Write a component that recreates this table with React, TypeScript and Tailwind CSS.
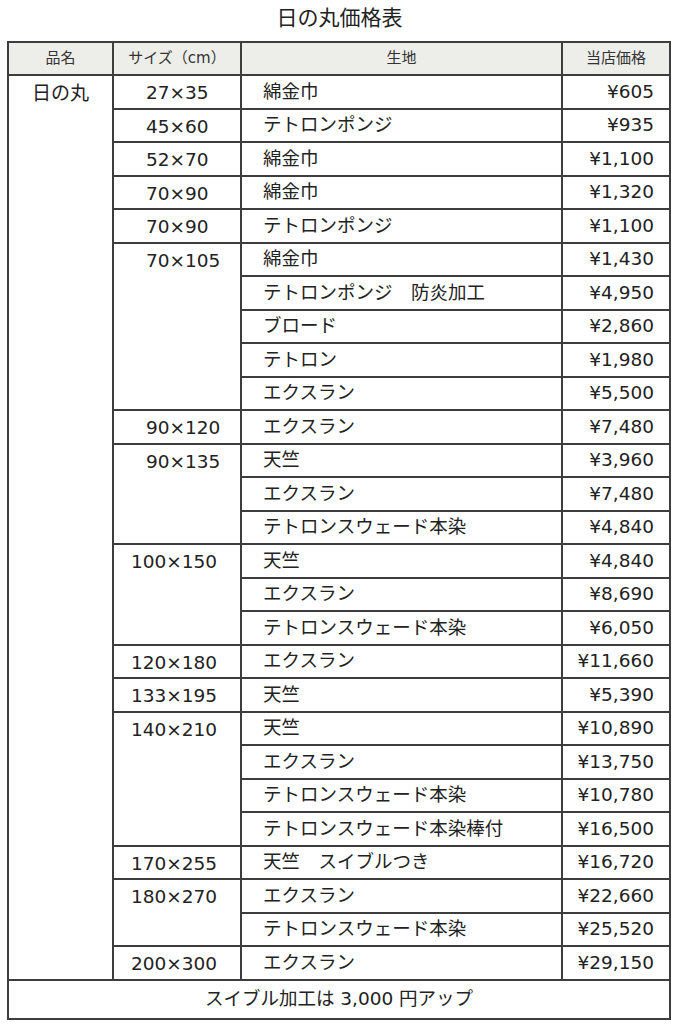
import React from "react"

type Group = { size: string; items: [string, string][] }

const groups: Group[] = [
  { size: "27×35", items: [["綿金巾", "¥605"]] },
  { size: "45×60", items: [["テトロンポンジ", "¥935"]] },
  { size: "52×70", items: [["綿金巾", "¥1,100"]] },
  { size: "70×90", items: [["綿金巾", "¥1,320"]] },
  { size: "70×90", items: [["テトロンポンジ", "¥1,100"]] },
  {
    size: "70×105",
    items: [
      ["綿金巾", "¥1,430"],
      ["テトロンポンジ　防炎加工", "¥4,950"],
      ["ブロード", "¥2,860"],
      ["テトロン", "¥1,980"],
      ["エクスラン", "¥5,500"],
    ],
  },
  { size: "90×120", items: [["エクスラン", "¥7,480"]] },
  {
    size: "90×135",
    items: [
      ["天竺", "¥3,960"],
      ["エクスラン", "¥7,480"],
      ["テトロンスウェード本染", "¥4,840"],
    ],
  },
  {
    size: "100×150",
    items: [
      ["天竺", "¥4,840"],
      ["エクスラン", "¥8,690"],
      ["テトロンスウェード本染", "¥6,050"],
    ],
  },
  { size: "120×180", items: [["エクスラン", "¥11,660"]] },
  { size: "133×195", items: [["天竺", "¥5,390"]] },
  {
    size: "140×210",
    items: [
      ["天竺", "¥10,890"],
      ["エクスラン", "¥13,750"],
      ["テトロンスウェード本染", "¥10,780"],
      ["テトロンスウェード本染棒付", "¥16,500"],
    ],
  },
  { size: "170×255", items: [["天竺　スイブルつき", "¥16,720"]] },
  {
    size: "180×270",
    items: [
      ["エクスラン", "¥22,660"],
      ["テトロンスウェード本染", "¥25,520"],
    ],
  },
  { size: "200×300", items: [["エクスラン", "¥29,150"]] },
]

const totalRows = groups.reduce((n, g) => n + g.items.length, 0)

const cell = "border-2 border-[#3d3d3d] p-0"

export default function App() {
  return (
    <div
      className="w-[679px] h-[1024px] bg-white text-[#222]"
      style={{ fontFamily: '"DejaVu Sans", "Noto Sans CJK JP", sans-serif' }}
    >
      <div className="pt-[5px] h-[41px] text-center text-[21px] leading-[26px]">日の丸価格表</div>

      <table className="ml-[7px] w-[662px] table-fixed border-collapse">
        <colgroup>
          <col className="w-[105px]" />
          <col className="w-[128px]" />
          <col className="w-[321px]" />
          <col className="w-[108px]" />
        </colgroup>
        <thead>
          <tr className="h-[33px] bg-[#ededea] text-[15px] text-[#333]">
            <th className={`${cell} font-normal`}>品名</th>
            <th className={`${cell} font-normal`}>サイズ（cm）</th>
            <th className={`${cell} font-normal`}>生地</th>
            <th className={`${cell} font-normal`}>当店価格</th>
          </tr>
        </thead>
        <tbody className="text-[18.5px] leading-[22px]">
          {groups.map((g, gi) =>
            g.items.map(([fabric, price], ii) => (
              <tr key={`${gi}-${ii}`} className="h-[33.5px]">
                {gi === 0 && ii === 0 && (
                  <td rowSpan={totalRows} className={`${cell} align-top text-center text-[19px] pt-[6px]`}>
                    日の丸
                  </td>
                )}
                {ii === 0 && (
                  <td
                    rowSpan={g.items.length}
                    className={`${cell} align-top pt-[6px] ${g.size.split("×")[0].length >= 3 ? "pl-[17px]" : "pl-[32px]"}`}
                  >
                    {g.size}
                  </td>
                )}
                <td className={`${cell} pl-[21px]`}>{fabric}</td>
                <td className={`${cell} text-right pr-[15px]`}>{price}</td>
              </tr>
            ))
          )}
          <tr className="h-[39px]">
            <td colSpan={4} className={`${cell} text-center`}>
              スイブル加工は 3,000 円アップ
            </td>
          </tr>
        </tbody>
      </table>
    </div>
  )
}
